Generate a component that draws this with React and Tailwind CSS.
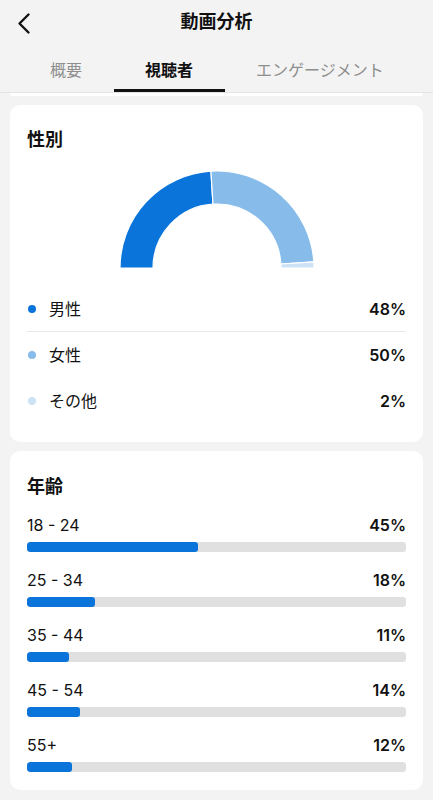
const GENDER = [
  { label: "男性", value: 48, color: "#0a74da", dot: "bg-[#0a74da]" },
  { label: "女性", value: 50, color: "#86bbea", dot: "bg-[#86bbea]" },
  { label: "その他", value: 2, color: "#cde2f5", dot: "bg-[#cde2f5]" },
];

const AGES = [
  { label: "18 - 24", value: 45 },
  { label: "25 - 34", value: 18 },
  { label: "35 - 44", value: 11 },
  { label: "45 - 54", value: 14 },
  { label: "55+", value: 12 },
];

const CX = 98;
const CY = 98;
const R = 97;
const RI = 64;

function pt(radius, deg) {
  const a = (deg * Math.PI) / 180;
  return `${(CX + radius * Math.cos(a)).toFixed(2)} ${(CY - radius * Math.sin(a)).toFixed(2)}`;
}

function arc(a0, a1) {
  return `M ${pt(R, a0)} A ${R} ${R} 0 0 1 ${pt(R, a1)} L ${pt(RI, a1)} A ${RI} ${RI} 0 0 0 ${pt(RI, a0)} Z`;
}

function HalfDonut() {
  let start = 180;
  const segs = GENDER.map((g) => {
    const end = start - (g.value / 100) * 180;
    const d = arc(start, end);
    start = end;
    return { d, color: g.color, key: g.label };
  });
  return (
    <svg width="196" height="99" viewBox="0 0 196 99" className="block">
      {segs.map((s) => (
        <path key={s.key} d={s.d} fill={s.color} stroke="#ffffff" strokeWidth="1.2" />
      ))}
    </svg>
  );
}

function BackIcon() {
  return (
    <svg width="20" height="24" viewBox="0 0 20 24" fill="none" className="absolute left-[12px] top-[11px]">
      <path d="M16.5 3.5 L7.5 12.5 L16.5 21.5" stroke="#111111" strokeWidth="2.4" strokeLinecap="round" strokeLinejoin="round" />
    </svg>
  );
}

export default function App() {
  return (
    <div
      className="min-h-[800px] w-[433px] bg-[#f3f3f3] text-[#111111]"
      style={{ fontFamily: 'Inter, "Noto Sans CJK JP", sans-serif' }}
    >
      <div className="border-b border-[#e4e4e4]">
        <div className="relative flex h-[44px] items-center justify-center">
          <BackIcon />
          <h1 className="text-[18px] font-bold leading-[24px]">動画分析</h1>
        </div>
        <div className="flex pl-[18.5px] text-[16px] leading-[24px]">
          <div className="border-b-[3px] border-transparent px-[31.5px] pb-[7px] pt-[14px] text-[#8e8e8e]">概要</div>
          <div className="border-b-[3px] border-[#111111] px-[31.5px] pb-[7px] pt-[14px] font-bold">視聴者</div>
          <div className="border-b-[3px] border-transparent px-[31.5px] pb-[7px] pt-[14px] text-[#8e8e8e]">エンゲージメント</div>
        </div>
      </div>

      <div className="px-[10px]">
        <div className="h-[3px] rounded-b-[8px] bg-white" />

        <div className="mt-[9px] rounded-[10px] bg-white px-[17px] pb-[18px] pt-[23px]">
          <h2 className="text-[18px] font-bold leading-[24px]">性別</h2>
          <div className="mt-[18px] flex justify-center">
            <HalfDonut />
          </div>
          <div className="mt-[17px]">
            {GENDER.map((g, i) => (
              <div
                key={g.label}
                className={`flex h-[46px] items-center justify-between ${i === 0 ? "border-b border-[#e8e8e8]" : ""}`}
              >
                <div className="flex items-center">
                  <span className={`ml-[1px] h-[8px] w-[8px] rounded-full ${g.dot}`} />
                  <span className="ml-[13px] text-[16px] leading-[20px]">{g.label}</span>
                </div>
                <span className="text-[16px] font-semibold leading-[20px]">{g.value}%</span>
              </div>
            ))}
          </div>
        </div>

        <div className="mt-[9px] rounded-[10px] bg-white px-[17px] pb-[18px] pt-[24px]">
          <h2 className="text-[18px] font-bold leading-[24px]">年齢</h2>
          <div className="mt-[16px] flex flex-col gap-[18px]">
            {AGES.map((a) => (
              <div key={a.label}>
                <div className="flex items-center justify-between text-[16px] leading-[20px]">
                  <span>{a.label}</span>
                  <span className="font-semibold">{a.value}%</span>
                </div>
                <div className="mt-[7px] h-[10px] w-full overflow-hidden rounded-[3px] bg-[#e0e0e0]">
                  <div className="h-full rounded-[3px] bg-[#0a74da]" style={{ width: `${a.value}%` }} />
                </div>
              </div>
            ))}
          </div>
        </div>
      </div>
    </div>
  );
}
